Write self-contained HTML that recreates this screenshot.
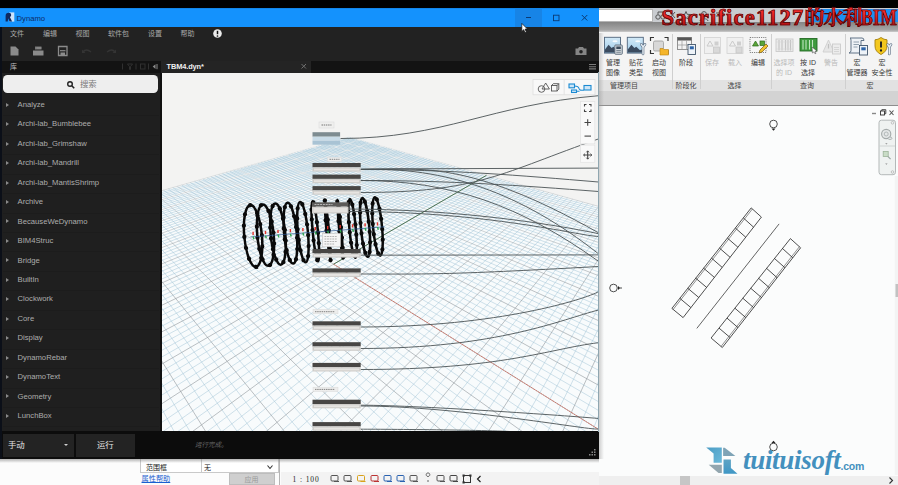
<!DOCTYPE html><html><head><meta charset="utf-8"><title>Dynamo</title><style>
*{margin:0;padding:0;box-sizing:border-box}
html,body{width:898px;height:485px;overflow:hidden;background:#fbfcfc;font-family:"Liberation Sans","Noto Sans CJK SC",sans-serif;}
.a{position:absolute}
.t{position:absolute;white-space:nowrap;line-height:1}
#dyn{left:0;top:0;width:599px;height:459px;overflow:hidden}
.menu .t{top:29.5px;font-size:7px;color:#a8a8a8}
.lib .it{position:absolute;left:17.5px;font-size:7.700px;color:#adadad;white-space:nowrap;line-height:1}
.lib .tri{position:absolute;left:6px;width:0;height:0;border-left:3px solid #8a8a8a;border-top:2px solid transparent;border-bottom:2px solid transparent}
.lib .sep{position:absolute;left:3px;width:156px;height:1px;background:#1c1c1c}
.rb .t{font-size:7px;color:#3a3a3a;text-align:center;transform:translateX(-50%)}
.rb .d{color:#b9b9b9}
.rb .pl{font-size:7px;color:#444;top:81.500px;transform:translateX(-50%)}
.rt span{color:transparent;background:linear-gradient(#f22a2a 30%,#a80c10 88%);-webkit-background-clip:text;background-clip:text;-webkit-text-stroke:0.7px #4a0505}
.rb .vs{position:absolute;top:34px;width:1px;height:55px;background:#cfcfcf}
</style></head><body>
<div class="a" style="left:0;top:0;width:898px;height:8px;background:#000"></div>
<div class="a" style="left:599px;top:8px;width:299px;height:14px;background:#c9ccd0"></div>
<div class="a" style="left:599px;top:8.500px;width:54px;height:13px;background:#fff;border:1px solid #b5b5b5;border-left:0"></div>
<div class="a" style="left:809px;top:8.500px;width:89px;height:13.500px;background:#1c8ff2"></div>
<svg class="a" style="left:652px;top:9px" width="160" height="13" viewBox="0 0 160 13"><g fill="none" stroke="#555" stroke-width="1"><circle cx="6" cy="8" r="2.2"/><circle cx="11" cy="8" r="2.2"/><path d="M6 5.5V3h5v2.5"/><path d="M18 3l5 6M23 3l-5 6"/><path d="M34 2.5l1.2 2.8 3 .2-2.3 1.9.8 2.9-2.7-1.6-2.7 1.6.8-2.9-2.3-1.9 3-.2z"/><circle cx="52" cy="5" r="2.4"/><path d="M48 12c0-3 8-3 8 0"/><path d="M64 4h8M64 7h8"/></g></svg>
<div class="a" style="left:599px;top:21.500px;width:299px;height:10.500px;background:linear-gradient(#858585,#a6a6a6 80%,#cdcdcd)"></div>
<div class="a rb" style="left:599px;top:32px;width:299px;height:59px;background:#f4f4f4;overflow:visible">
<div class="a" style="left:0;top:48px;width:299px;height:11px;background:#e2e2e2"></div>
</div>
<div class="rb">
<div class="t" style="left:613px;top:59.2px">管理</div>
<div class="t" style="left:613px;top:68.7px">图像</div>
<div class="t" style="left:636px;top:59.2px">贴花</div>
<div class="t" style="left:636px;top:68.7px">类型</div>
<div class="t" style="left:659px;top:59.2px">启动</div>
<div class="t" style="left:659px;top:68.7px">视图</div>
<div class="t" style="left:686px;top:59.2px">阶段</div>
<div class="t d" style="left:712px;top:59.2px">保存</div>
<div class="t d" style="left:735px;top:59.2px">载入</div>
<div class="t" style="left:758px;top:59.2px">编辑</div>
<div class="t d" style="left:784px;top:59.2px">选择项</div>
<div class="t d" style="left:784px;top:68.7px">的 ID</div>
<div class="t" style="left:808px;top:59.2px">按 ID</div>
<div class="t" style="left:808px;top:68.7px">选择</div>
<div class="t d" style="left:831px;top:59.2px">警告</div>
<div class="t" style="left:857px;top:59.2px">宏</div>
<div class="t" style="left:857px;top:68.7px">管理器</div>
<div class="t" style="left:882px;top:59.2px">宏</div>
<div class="t" style="left:882px;top:68.7px">安全性</div>
<div class="t pl" style="left:624px">管理项目</div>
<div class="t pl" style="left:686px">阶段化</div>
<div class="t pl" style="left:734.5px">选择</div>
<div class="t pl" style="left:807px">查询</div>
<div class="t pl" style="left:870px">宏</div>
<div class="vs" style="left:672px"></div>
<div class="vs" style="left:699.5px"></div>
<div class="vs" style="left:771px"></div>
<div class="vs" style="left:844.5px"></div>
</div>
<svg class="a" style="left:599px;top:33px" width="299" height="26" viewBox="599 33 299 26">
<defs><linearGradient id="sky" x1="0" y1="0" x2="0" y2="1"><stop offset="0" stop-color="#d3eaf8"/><stop offset="1" stop-color="#9fcbe8"/></linearGradient></defs>
<rect x="604.5" y="37.300" width="16" height="15.800" fill="url(#sky)" stroke="#50657c" stroke-width="0.9"/><ellipse cx="615.0" cy="41.300" rx="2.600" ry="1" fill="#fff" opacity=".85"/><path d="M605.0 52.600v-3.200l3.600-4.600 3 3.200 1.800-1.300 3.800 3.600 2.800-1v3.300z" fill="#3b4b5f"/><rect x="614.800" y="45" width="7.500" height="9.300" rx="0.800" fill="#cfd5da" stroke="#5a6a7a" stroke-width="0.9"/><rect x="616.300" y="46.500" width="4.500" height="2.500" fill="#3d4d5e"/><path d="M616.300 50.500h4.500M616.300 52.300h4.500" stroke="#6a7886" stroke-width="0.8"/>
<rect x="627.3" y="37.300" width="16" height="15.800" fill="url(#sky)" stroke="#50657c" stroke-width="0.9"/><ellipse cx="637.8" cy="41.300" rx="2.600" ry="1" fill="#fff" opacity=".85"/><path d="M627.8 52.600v-3.200l3.600-4.600 3 3.200 1.800-1.300 3.800 3.600 2.800-1v3.300z" fill="#3b4b5f"/><path d="M641.300 44.300l1.700 2.700v7M645 44.300l-1.900 2.700" stroke="#5a6d82" stroke-width="2.600" fill="none" stroke-linecap="round"/><path d="M641.300 44.300l1.700 2.700v7M645 44.300l-1.900 2.700" stroke="#e6edf3" stroke-width="1.400" fill="none" stroke-linecap="round"/>
<g fill="none" stroke="#333" stroke-width="1.2"><path d="M650.5 41v-3.5h3.5M664.5 37.5h3.5v3.5M668 50v3.5h-3.5M654 53.5h-3.5v-3.5"/></g><rect x="653.5" y="41" width="10" height="10" rx="1.5" fill="#d8d8d8" stroke="#9a9a9a" stroke-width="0.8"/><path d="M660 48.5h3l1 1h4.5v5.5h-8.5z" fill="#f4b52a" stroke="#b97f10" stroke-width="0.6"/>
<rect x="677.5" y="37.5" width="14" height="12" fill="#f2f2f2" stroke="#7a7a7a" stroke-width="0.8"/><rect x="677.5" y="37.5" width="14" height="3" fill="#555"/><path d="M682 40.5v9M686.5 40.5v9M677.5 45h14" stroke="#9a9a9a" stroke-width="0.7"/><rect x="688" y="44.5" width="7.5" height="10" fill="#eef3f8" stroke="#42566b" stroke-width="0.9"/><rect x="689.8" y="46.3" width="4" height="3" fill="#2d64a8"/>
<rect x="704.5" y="37.5" width="16" height="16" fill="#f0f0f0" stroke="#d2d2d2" stroke-width="0.8"/><path d="M707.0 46l3-5 3 5z" fill="none" stroke="#c6c6c6" stroke-width="0.9"/><rect x="714.5" y="41.5" width="4" height="4" fill="#cfcfcf"/><rect x="713.5" y="47" width="6" height="6" fill="#d9d9d9" stroke="#c4c4c4" stroke-width="0.7"/>
<rect x="727" y="37.5" width="16" height="16" fill="#f0f0f0" stroke="#d2d2d2" stroke-width="0.8"/><path d="M729.5 46l3-5 3 5z" fill="none" stroke="#c6c6c6" stroke-width="0.9"/><rect x="737" y="41.5" width="4" height="4" fill="#cfcfcf"/><rect x="736" y="47" width="6" height="6" fill="#d9d9d9" stroke="#c4c4c4" stroke-width="0.7"/>
<rect x="750" y="37.5" width="16" height="15" fill="#f6f6f6" stroke="#666" stroke-width="0.8" stroke-dasharray="1.2 1"/><path d="M752.5 46l3-5 3 5z" fill="#5aa53a" stroke="#2d6a1a" stroke-width="0.7"/><rect x="760" y="41" width="4.5" height="4.5" fill="#5aa53a" stroke="#2d6a1a" stroke-width="0.7"/><path d="M759 53l1-3 6-6 2 2-6 6z" fill="#f2c230" stroke="#7a5a10" stroke-width="0.7"/>
<rect x="776" y="39" width="17" height="12.500" fill="#ebebeb" stroke="#c6c6c6" stroke-width="0.8"/><path d="M779 40v10.500M782 40v10.500M785.500 40v10.500M788 40v10.500M790.500 40v10.500" stroke="#c4c4c4" stroke-width="1.100"/><path d="M776 42h17M776 49h17" stroke="#d6d6d6" stroke-width="0.6"/>
<rect x="800" y="38.5" width="17" height="12.5" fill="#3e9a3e" stroke="#256b25" stroke-width="0.9"/><path d="M803 40v9.5M806 40v9.5M809.5 40v9.5M812.5 40v9.5" stroke="#bfe6bf" stroke-width="1.1"/><path d="M812 47l5 4-2 .3 1 2-1 .5-1-2-1.6 1.2z" fill="#fff" stroke="#333" stroke-width="0.5"/>
<path d="M823 52l5.500-12 5.500 12z" fill="#e6e6e6" stroke="#cbcbcb" stroke-width="0.8"/><path d="M828.500 44v4.500" stroke="#c0c0c0" stroke-width="1.200"/><rect x="832.500" y="44" width="8" height="10" fill="#ececec" stroke="#c8c8c8" stroke-width="0.8"/><path d="M834 47.500h5M834 49.500h5M834 51.500h5" stroke="#cdcdcd" stroke-width="0.7"/>
<path d="M850 38h12q2 0 2 2.5h-3v10q0 2.5-2 2.5h-10q2-.5 2-2.5v-10q0-2.500-1-2.500z" fill="#eef2f6" stroke="#51657a" stroke-width="0.9"/><path d="M853.500 42h5.500M853.500 44.500h5.500M853.500 47h4" stroke="#7a8b9c" stroke-width="0.8"/><rect x="859.5" y="45.500" width="8" height="9.500" fill="#eef3f8" stroke="#42566b" stroke-width="0.9"/><rect x="861.300" y="47.300" width="4.400" height="3" fill="#2d64a8"/>
<path d="M881 37.500q3 2.300 6 2.300v6.200q0 5.500-6 8.500q-6-3-6-8.500v-6.200q3 0 6-2.300z" fill="#f3c81f" stroke="#a57f0c" stroke-width="0.9"/><path d="M881 41.500v6" stroke="#222" stroke-width="1.900"/><circle cx="881" cy="50.500" r="1.150" fill="#222"/><path d="M887.700 44.500l1.600 2.500v7M891 44.500l-1.700 2.500" stroke="#5a6d82" stroke-width="2.600" fill="none" stroke-linecap="round"/><path d="M887.700 44.500l1.600 2.500v7M891 44.500l-1.700 2.500" stroke="#e6edf3" stroke-width="1.400" fill="none" stroke-linecap="round"/>
</svg>
<div class="a" style="left:599px;top:91px;width:299px;height:14px;background:#d3d3d3"></div>
<div class="a" style="left:599px;top:104.500px;width:299px;height:1px;background:#8e8e8e"></div>
<div class="a" style="left:599px;top:105.500px;width:299px;height:370px;background:#fbfcfc"></div>
<svg class="a" style="left:599px;top:105px" width="299" height="371" viewBox="599 105 299 371">
<g fill="none" stroke="#222" stroke-width="0.8">
<path d="M751.2 207.9L761.4 217.1L683.1 317.6L671.9 308.4Z"/><path d="M743.3 217.9L753.6 227.2"/><path d="M735.3 228.0L745.7 237.2"/><path d="M727.4 238.1L737.9 247.2"/><path d="M719.5 248.1L730.1 257.3"/><path d="M711.5 258.1L722.2 267.4"/><path d="M703.6 268.2L714.4 277.4"/><path d="M695.7 278.2L706.6 287.4"/><path d="M687.8 288.3L698.8 297.5"/><path d="M679.8 298.3L690.9 307.6"/><path d="M752.4 209.0L673.1 309.5" stroke-width="0.5"/><path d="M790.4 238.6L800.6 247.8L722.3 347.5L711.1 338.0Z"/><path d="M782.5 248.5L792.8 257.8"/><path d="M774.5 258.5L784.9 267.7"/><path d="M766.6 268.4L777.1 277.7"/><path d="M758.7 278.4L769.3 287.7"/><path d="M750.8 288.3L761.5 297.6"/><path d="M742.8 298.2L753.6 307.6"/><path d="M734.9 308.2L745.8 317.6"/><path d="M727.0 318.1L738.0 327.6"/><path d="M719.0 328.1L730.1 337.5"/><path d="M799.4 246.7L721.1 346.4" stroke-width="0.5"/><path d="M779.1 223.900L696.800 328.400" stroke-width="0.700"/>
</g>
<g fill="none" stroke="#222" stroke-width="0.8"><circle cx="773.500" cy="124" r="3.800"/><circle cx="773.500" cy="447" r="3.800"/><circle cx="613.500" cy="288" r="3.800"/></g><path d="M771.500 128.500l2 2.200 2-2.200z" fill="#222"/><path d="M771.500 443l2-2.200 2 2.200z" fill="#222"/><path d="M618 286l2.200 2-2.200 2z" fill="#222"/><path d="M620 288h2" stroke="#222" stroke-width="0.8"/>
<rect x="879" y="120.200" width="16.500" height="54.500" rx="2.500" fill="#eff2f1" stroke="#b4b9b9" stroke-width="1"/><path d="M879.500 146h15.500" stroke="#c9cdcd" stroke-width="0.8"/><circle cx="886.200" cy="134" r="4.600" fill="#e4e7e7" stroke="#a4aaaa" stroke-width="1.100"/><circle cx="886.200" cy="134" r="2" fill="none" stroke="#adb3b3" stroke-width="0.900"/><ellipse cx="890" cy="138.300" rx="2" ry="1.200" fill="#e8eaea" stroke="#9aa0a0" stroke-width="0.700"/><rect x="883.200" y="151.500" width="5" height="5" fill="#c9dcc6" stroke="#9db39a" stroke-width="0.8"/><path d="M887.800 156.300l2.800 2.800" stroke="#9aa6a0" stroke-width="1.200"/><circle cx="892.500" cy="122.800" r="1.300" fill="none" stroke="#a5a5a5" stroke-width="0.6"/><circle cx="892.500" cy="172" r="1.300" fill="none" stroke="#a5a5a5" stroke-width="0.6"/><path d="M885.200 143.300h2.400l-1.200 1.300zM885.200 163.500h2.400l-1.200 1.300z" fill="#888"/>
<g stroke="#555" stroke-width="0.9" fill="none"><path d="M872 113.500h4" stroke="#888" stroke-width="1.400"/><rect x="880.500" y="111" width="4" height="4" stroke="#333"/><path d="M881.800 111v-1.300h4v4h-1.300" stroke="#333"/><path d="M889.500 110.500l4 4.500M893.500 110.500l-4 4.500" stroke-width="1.100"/></g>
<rect x="894.800" y="176" width="3.200" height="299" fill="#f3f4f4"/><rect x="895.500" y="284" width="2.500" height="13" fill="#c2c2c2"/>
</svg>
<div class="a" style="left:599px;top:475.500px;width:299px;height:10px;background:#efefef"></div>
<div class="a" style="left:680px;top:476px;width:10px;height:9px;background:#c6c6c6"></div>
<svg class="a" style="left:886px;top:476px" width="10" height="9"><path d="M3.500 1.500l3 3-3 3" fill="none" stroke="#333" stroke-width="1.100"/></svg>
<svg class="a" style="left:704px;top:444px" width="36" height="32" viewBox="704 444 36 32"><defs><linearGradient id="lg1" x1="0" y1="0" x2="1" y2="1"><stop offset="0" stop-color="#4b9cc4"/><stop offset="1" stop-color="#6bb9da"/></linearGradient><linearGradient id="lg2" x1="0" y1="0" x2="0" y2="1"><stop offset="0" stop-color="#5fa4c4"/><stop offset="1" stop-color="#3f97c6"/></linearGradient></defs><path d="M706.200 447.400h15.600v15.300h-8.200v-9.100z" fill="url(#lg1)"/><path d="M723.100 447.800h1.600l10.700 8.300h-12.300z" fill="#7ea3b6"/><path d="M723.500 459.400h7.400v8.600l6.600 5.800h-14z" fill="url(#lg2)"/><path d="M708.700 464.700h13.100v8.300h-3.300z" fill="#93a6af"/></svg><div class="t" style="left:743px;top:444.500px;font:italic bold 27px 'Liberation Serif',serif;color:#4390be;letter-spacing:-0.3px">tuituisoft</div><div class="t" style="left:840.500px;top:460px;font:bold 10.500px 'Liberation Sans',sans-serif;color:#4390be;letter-spacing:-0.2px">.com</div>
<div class="a" style="left:0;top:459px;width:599px;height:26px;background:#fcfcfc"></div>
<div class="a" style="left:140px;top:459px;width:139px;height:14px;background:#fff;border:1px solid #c9c9c9;border-top:0"></div><div class="a" style="left:201px;top:459px;width:1px;height:14px;background:#c9c9c9"></div><div class="t" style="left:146px;top:463.500px;font-size:7px;color:#222">范围框</div><div class="t" style="left:204px;top:463.500px;font-size:7px;color:#222">无</div><svg class="a" style="left:266px;top:463px" width="8" height="8"><path d="M1.500 2.500l2.500 3 2.500-3" fill="none" stroke="#333" stroke-width="1.100"/></svg><div class="t" style="left:141.500px;top:475px;font-size:7.200px;color:#1a5fd0;text-decoration:underline">属性帮助</div><div class="a" style="left:228.500px;top:473px;width:46.500px;height:12px;background:#cfcfcf;border:1px solid #bdbdbd"></div><div class="t" style="left:244.500px;top:475.500px;font-size:7px;color:#9a9a9a">应用</div><div class="a" style="left:278.500px;top:459px;width:1px;height:26px;background:#b5b5b5"></div><div class="a" style="left:281px;top:459px;width:318px;height:13px;background:#fbfcfc"></div><div class="a" style="left:281px;top:472px;width:318px;height:13px;background:#f3f3f3"></div><div class="t" style="left:292.500px;top:475px;font:7.500px 'Liberation Serif',serif;color:#222;letter-spacing:0.9px">1 : 100</div><svg class="a" style="left:0;top:0" width="600" height="485" viewBox="0 0 600 485"><rect x="331" y="475.500" width="7" height="5.500" rx="1" fill="none" stroke="#555" stroke-width="1"/><path d="M334 481.500h5" stroke="#555" stroke-width="1"/><rect x="344" y="475.500" width="7" height="5.500" rx="1" fill="none" stroke="#555" stroke-width="1"/><path d="M347 481.500h5" stroke="#555" stroke-width="1"/><rect x="357.5" y="475.500" width="7" height="5.500" rx="1" fill="none" stroke="#d9a21b" stroke-width="1"/><path d="M360.5 481.500h5" stroke="#d9a21b" stroke-width="1"/><rect x="371" y="475.500" width="7" height="5.500" rx="1" fill="none" stroke="#b33" stroke-width="1"/><path d="M374 481.500h5" stroke="#b33" stroke-width="1"/><rect x="384" y="475.500" width="7" height="5.500" rx="1" fill="none" stroke="#2a62b0" stroke-width="1"/><path d="M387 481.500h5" stroke="#2a62b0" stroke-width="1"/><rect x="397" y="475.500" width="7" height="5.500" rx="1" fill="none" stroke="#2a62b0" stroke-width="1"/><path d="M400 481.500h5" stroke="#2a62b0" stroke-width="1"/><rect x="410" y="475.500" width="7" height="5.500" rx="1" fill="none" stroke="#555" stroke-width="1"/><path d="M413 481.500h5" stroke="#555" stroke-width="1"/><path d="M428 476.500a1.800 1.800 0 1 1 0.010 0zM428 480v2" fill="none" stroke="#555" stroke-width="0.9"/><rect x="437" y="475.500" width="7" height="5.500" rx="1" fill="none" stroke="#555" stroke-width="1"/><path d="M440 481.500h5" stroke="#555" stroke-width="1"/><rect x="450" y="475.500" width="7" height="5.500" rx="1" fill="none" stroke="#444" stroke-width="1"/><path d="M453 481.500h5" stroke="#444" stroke-width="1"/><rect x="463.5" y="475.500" width="7" height="7" fill="none" stroke="#333" stroke-width="1"/><rect x="462.5" y="474.500" width="2.200" height="2.200" fill="#333"/><rect x="469.3" y="474.500" width="2.200" height="2.200" fill="#333"/><rect x="462.5" y="481.300" width="2.200" height="2.200" fill="#333"/><path d="M480.5 476l-3 3 3 3" fill="none" stroke="#222" stroke-width="1.200"/></svg>
<div class="a" style="left:0;top:459px;width:599px;height:4px;background:linear-gradient(rgba(120,120,120,.55),rgba(200,200,200,0))"></div>
<div id="dyn" class="a">
<div class="a" style="left:0;top:8px;width:599px;height:18.600px;background:linear-gradient(#0f6fc4,#1492fd 0.8px)"></div><div class="a" style="left:514.500px;top:8.500px;width:27.500px;height:18.100px;background:#1784e6"></div><svg class="a" style="left:0;top:8px" width="599" height="30" viewBox="0 8 599 30"><rect x="9.300" y="12.400" width="5" height="9.200" fill="#cfe4fa"/><path d="M5.600 21.500v-5.500q0-3.300 3.200-3.300q2.400 0 2.400 2.300q0 1.500-1.300 2l2.200 4.500h-2.600l-1.200-3.300l-.6 3.300z" fill="#10285e"/><path d="M526 17.500h5" stroke="#0b3a74" stroke-width="1"/><rect x="553.500" y="15.200" width="5.500" height="5.500" fill="none" stroke="#0b3a74" stroke-width="0.9"/><path d="M581.800 15l5.500 5.500M587.300 15l-5.500 5.500" stroke="#0b3a74" stroke-width="1"/></svg><div class="t" style="left:16.500px;top:14.900px;font-size:7.700px;color:#0f2c66">Dynamo</div><div class="a" style="left:0;top:26.500px;width:599px;height:34px;background:#222"></div><div class="menu"><div class="t" style="left:10px">文件</div><div class="t" style="left:43px">编辑</div><div class="t" style="left:75.5px">视图</div><div class="t" style="left:108px">软件包</div><div class="t" style="left:148px">设置</div><div class="t" style="left:180.5px">帮助</div></div><svg class="a" style="left:0;top:26px" width="599" height="34" viewBox="0 26 599 34"><circle cx="217.500" cy="33.500" r="4.300" fill="#ececec"/><path d="M217.500 30.800v3.400" stroke="#111" stroke-width="1.500"/><circle cx="217.500" cy="36" r="0.850" fill="#111"/><path d="M10.500 46.500h5l3 3v6h-8z" fill="#8b8b8b"/><path d="M35 46.500h6.500v3h-6.500z" fill="#777"/><path d="M33 50.500h10.500v5h-10.500z" fill="#8b8b8b"/><path d="M36.500 48h5" stroke="#aaa" stroke-width="0.6"/><path d="M58.500 46.500h8.500v9h-8.500z" fill="none" stroke="#8b8b8b" stroke-width="1.300"/><path d="M60 50.700h5.500" stroke="#8b8b8b" stroke-width="1.200"/><rect x="60.500" y="52.500" width="4.500" height="3" fill="#8b8b8b"/><path d="M83 52q3-4 8 0" fill="none" stroke="#343434" stroke-width="1.600"/><path d="M82 49.500v3.500h3.500z" fill="#343434"/><path d="M115 52q-3-4-8 0" fill="none" stroke="#343434" stroke-width="1.600"/><path d="M116 49.500v3.500h-3.500z" fill="#343434"/><path d="M575.500 48.500h2.500l1-1.500h4l1 1.500h2.500v6.500h-11z" fill="#858585"/><circle cx="581" cy="51.700" r="1.800" fill="#222"/></svg><div class="a" style="left:0;top:60.500px;width:599px;height:12px;background:#131313"></div><div class="a" style="left:161px;top:60.500px;width:149.500px;height:12px;background:#242424"></div><div class="t" style="left:10px;top:63.200px;font-size:7px;color:#bdbdbd">库</div><div class="t" style="left:166.500px;top:62.800px;font-size:7.400px;color:#f0f0f0;font-weight:bold;letter-spacing:-0.100px">TBM4.dyn*</div><svg class="a" style="left:0;top:60px" width="599" height="13" viewBox="0 60 599 13"><g stroke="#303030" stroke-width="1" fill="none"><path d="M122.500 63.500v6M136 63.500v6M148.500 63.500v6"/><path d="M127.500 64h5l-2 2.500v3h-1v-3z"/><rect x="140.500" y="64" width="4.500" height="5"/></g><path d="M155.500 64.300v4.600l-2.800-2.300z" fill="#8a8a8a"/><path d="M157 64v5.200" stroke="#8a8a8a" stroke-width="1"/><path d="M301.500 64l4.500 4.500M306 64l-4.500 4.500" stroke="#6f6f6f" stroke-width="1"/><path d="M589 64.500h7M589 66.700h7M589 68.900h7" stroke="#7a7a7a" stroke-width="1.100"/></svg><div class="a lib" style="left:0;top:72.500px;width:161px;height:359px;background:#1f1f1f;overflow:hidden"><div class="a" style="left:3px;top:2.500px;width:154.500px;height:17.500px;background:#eee;border-radius:4.500px"></div><svg class="a" style="left:66px;top:7px" width="10" height="10"><circle cx="4" cy="4" r="2.300" fill="none" stroke="#222" stroke-width="1.400"/><path d="M5.800 5.800l2.400 2.400" stroke="#222" stroke-width="1.600"/></svg><div class="t" style="left:80px;top:7.400px;font-size:8.400px;color:#7a7a7a">搜索</div><div class="tri" style="top:30.3px"></div><div class="it" style="top:28.5px">Analyze</div><div class="sep" style="top:42.8px"></div><div class="tri" style="top:49.7px"></div><div class="it" style="top:47.9px">Archi-lab_Bumblebee</div><div class="sep" style="top:62.2px"></div><div class="tri" style="top:69.2px"></div><div class="it" style="top:67.4px">Archi-lab_Grimshaw</div><div class="sep" style="top:81.7px"></div><div class="tri" style="top:88.6px"></div><div class="it" style="top:86.8px">Archi-lab_Mandrill</div><div class="sep" style="top:101.1px"></div><div class="tri" style="top:108.1px"></div><div class="it" style="top:106.3px">Archi-lab_MantisShrimp</div><div class="sep" style="top:120.6px"></div><div class="tri" style="top:127.5px"></div><div class="it" style="top:125.7px">Archive</div><div class="sep" style="top:140.0px"></div><div class="tri" style="top:146.9px"></div><div class="it" style="top:145.1px">BecauseWeDynamo</div><div class="sep" style="top:159.4px"></div><div class="tri" style="top:166.4px"></div><div class="it" style="top:164.6px">BIM4Struc</div><div class="sep" style="top:178.9px"></div><div class="tri" style="top:185.8px"></div><div class="it" style="top:184.0px">Bridge</div><div class="sep" style="top:198.3px"></div><div class="tri" style="top:205.3px"></div><div class="it" style="top:203.5px">BuiltIn</div><div class="sep" style="top:217.8px"></div><div class="tri" style="top:224.7px"></div><div class="it" style="top:222.9px">Clockwork</div><div class="sep" style="top:237.2px"></div><div class="tri" style="top:244.1px"></div><div class="it" style="top:242.3px">Core</div><div class="sep" style="top:256.6px"></div><div class="tri" style="top:263.6px"></div><div class="it" style="top:261.8px">Display</div><div class="sep" style="top:276.1px"></div><div class="tri" style="top:283.0px"></div><div class="it" style="top:281.2px">DynamoRebar</div><div class="sep" style="top:295.5px"></div><div class="tri" style="top:302.5px"></div><div class="it" style="top:300.7px">DynamoText</div><div class="sep" style="top:315.0px"></div><div class="tri" style="top:321.9px"></div><div class="it" style="top:320.1px">Geometry</div><div class="sep" style="top:334.4px"></div><div class="tri" style="top:341.3px"></div><div class="it" style="top:339.5px">LunchBox</div><div class="sep" style="top:353.8px"></div></div><div class="a" style="left:160px;top:72.500px;width:1.500px;height:359px;background:#101010"></div><div class="a" style="left:0;top:431px;width:599px;height:28px;background:#0c0c0c"></div><div class="a" style="left:2.700px;top:433.500px;width:71.500px;height:23px;background:#232323"></div><div class="a" style="left:76px;top:433.500px;width:59px;height:23px;background:#232323"></div><div class="t" style="left:8px;top:440.600px;font-size:8.400px;color:#e4e4e4">手动</div><div class="a" style="left:63.500px;top:443.800px;width:0;height:0;border-top:2.500px solid #d0d0d0;border-left:2.300px solid transparent;border-right:2.300px solid transparent"></div><div class="t" style="left:97px;top:440.600px;font-size:8.400px;color:#e4e4e4">运行</div><div class="t" style="left:195px;top:441.800px;font-size:6.500px;color:#6a6a6a;font-style:italic">运行完成。</div><svg class="a" style="left:588px;top:449px" width="9" height="9"><g fill="#8a8a8a"><rect x="6" y="0" width="1.500" height="1.500"/><rect x="3.500" y="2.500" width="1.500" height="1.500"/><rect x="6" y="2.500" width="1.500" height="1.500"/><rect x="1" y="5" width="1.500" height="1.500"/><rect x="3.500" y="5" width="1.500" height="1.500"/><rect x="6" y="5" width="1.500" height="1.500"/></g></svg><div class="a" style="left:0;top:26.500px;width:2px;height:433px;background:#0b0f18"></div><svg class="a" style="left:161.500px;top:72.500px" width="437" height="358.500" viewBox="161.500 72.500 437 358.500"><rect x="161" y="72" width="438" height="360" fill="#f3f3f2"/><path d="M348.5 136.6L770.2 253.7L1109.2 4007.0L-1424.9 4023.4L-132.1 274.3Z" fill="#f8fbfc"/><path d="M-133.1 277.2L350.6 137.2M-121.7 271.4L-1270.8 4022.4M-134.1 280.1L352.6 137.7M-111.5 268.4L-1116.6 4021.4M-135.1 283.1L354.7 138.3M-101.5 265.6L-962.4 4020.4M-136.2 286.1L356.8 138.9M-91.8 262.8L-808.3 4019.4M-138.3 292.4L361.1 140.1M-72.9 257.4L-499.9 4017.4M-139.5 295.7L363.3 140.7M-63.8 254.8L-345.7 4016.4M-140.6 299.1L365.5 141.3M-54.9 252.2L-191.6 4015.4M-141.8 302.5L367.8 141.9M-46.2 249.7L-37.4 4014.4M-144.3 309.7L372.3 143.2M-29.4 244.9L270.9 4012.4M-145.6 313.4L374.6 143.8M-21.2 242.6L425.1 4011.4M-146.9 317.2L376.9 144.5M-13.2 240.3L579.3 4010.4M-148.2 321.1L379.3 145.1M-5.4 238.0L733.4 4009.5M-151.0 329.3L384.1 146.5M9.8 233.7L1041.8 4007.5M-152.5 333.5L386.5 147.2M17.2 231.6L1073.8 3615.3M-154.0 337.9L389.0 147.8M24.4 229.5L1025.6 3081.1M-155.6 342.4L391.5 148.5M31.5 227.5L989.8 2685.1M-158.8 351.8L396.6 149.9M45.2 223.5L940.4 2137.4M-160.5 356.7L399.2 150.7M51.9 221.6L922.5 1940.2M-162.3 361.8L401.8 151.4M58.4 219.7L907.8 1776.6M-164.1 367.0L404.4 152.1M64.9 217.9L895.3 1638.7M-167.8 378.0L409.8 153.6M77.4 214.3L875.5 1419.1M-169.8 383.7L412.5 154.4M83.5 212.6L867.5 1330.2M-171.9 389.7L415.3 155.1M89.5 210.8L860.4 1252.0M-174.0 395.8L418.1 155.9M95.3 209.2L854.1 1182.6M-178.4 408.7L423.8 157.5M106.8 205.9L843.5 1064.9M-180.8 415.5L426.7 158.3M112.3 204.3L839.0 1014.6M-183.2 422.6L429.7 159.1M117.8 202.7L834.8 968.9M-185.7 429.9L432.7 160.0M123.2 201.2L831.1 927.2M-191.1 445.4L438.7 161.6M133.7 198.2L824.5 854.0M-193.9 453.6L441.8 162.5M138.8 196.7L821.5 821.6M-196.8 462.1L445.0 163.4M143.8 195.3L818.8 791.7M-199.9 470.9L448.1 164.3M148.8 193.8L816.3 763.9M-206.4 489.8L454.6 166.1M158.4 191.1L811.8 714.0M-209.9 499.8L457.9 167.0M163.1 189.7L809.8 691.5M-213.5 510.3L461.3 167.9M167.8 188.4L807.9 670.3M-217.3 521.3L464.7 168.8M172.3 187.1L806.1 650.5M-225.4 544.8L471.6 170.8M181.3 184.5L802.8 614.3M-229.7 557.4L475.1 171.7M185.6 183.3L801.3 597.7M-234.3 570.6L478.7 172.7M189.9 182.1L799.9 582.0M-239.1 584.5L482.3 173.7M194.1 180.8L798.6 567.2M-249.4 614.6L489.8 175.8M202.4 178.5L796.1 539.7M-255.0 630.9L493.5 176.9M206.4 177.3L794.9 527.0M-261.0 648.1L497.4 177.9M210.4 176.2L793.8 514.9M-267.3 666.3L501.3 179.0M214.3 175.1L792.8 503.4M-281.0 706.2L509.2 181.2M222.0 172.9L790.8 481.8M-288.5 728.0L513.3 182.3M225.8 171.8L789.9 471.8M-296.6 751.3L517.4 183.5M229.5 170.7L789.1 462.1M-305.2 776.2L521.6 184.6M233.1 169.7L788.2 452.9M-324.2 831.6L530.2 187.0M240.3 167.6L786.7 435.6M-334.9 862.4L534.6 188.2M243.8 166.6L785.9 427.4M-346.4 895.7L539.0 189.5M247.2 165.6L785.2 419.6M-358.8 931.8L543.5 190.7M250.6 164.7L784.5 412.0M-387.1 1013.7L552.8 193.3M257.3 162.7L783.3 397.7M-403.2 1060.5L557.5 194.6M260.6 161.8L782.6 391.0M-420.9 1111.9L562.3 195.9M263.8 160.9L782.1 384.5M-440.5 1168.7L567.2 197.3M267.0 160.0L781.5 378.2M-486.6 1302.4L577.2 200.1M273.2 158.2L780.4 366.3M-513.9 1381.6L582.3 201.5M276.3 157.3L779.9 360.6M-544.9 1471.4L587.5 202.9M279.3 156.4L779.4 355.1M-580.2 1573.9L592.8 204.4M282.3 155.6L778.9 349.8M-668.5 1829.8L603.7 207.4M288.2 153.9L778.0 339.7M-724.6 1992.4L609.3 209.0M291.0 153.1L777.6 334.8M-791.7 2187.2L614.9 210.5M293.9 152.3L777.1 330.1M-873.7 2424.8L620.7 212.1M296.7 151.5L776.7 325.6M-1106.9 3101.1L632.5 215.4M302.2 149.9L776.0 316.9M-1281.0 3605.9L638.6 217.1M304.9 149.1L775.6 312.7M-1371.9 4023.1L644.8 218.8M307.6 148.3L775.2 308.6M-1225.9 4022.1L651.1 220.6M310.2 147.6L774.9 304.7M-934.0 4020.2L664.1 224.2M315.4 146.1L774.2 297.1M-788.1 4019.3L670.7 226.0M317.9 145.4L773.8 293.5M-642.1 4018.4L677.5 227.9M320.5 144.6L773.5 289.9M-496.2 4017.4L684.4 229.8M322.9 143.9L773.2 286.5M-204.3 4015.5L698.7 233.8M327.8 142.5L772.6 279.8M-58.4 4014.6L706.0 235.8M330.2 141.8L772.3 276.6M87.6 4013.6L713.5 237.9M332.6 141.2L772.0 273.5M233.5 4012.7L721.1 240.0M335.0 140.5L771.8 270.5M525.4 4010.8L736.8 244.4M339.6 139.2L771.2 264.6M671.4 4009.9L744.9 246.6M341.8 138.5L771.0 261.8M817.3 4008.9L753.2 248.9M344.1 137.9L770.7 259.0M963.2 4008.0L761.6 251.3M346.3 137.2L770.5 256.3" stroke="#9fc2d4" stroke-width="0.6" fill="none" opacity="0.8"/><defs><linearGradient id="mg" gradientUnits="userSpaceOnUse" x1="0" y1="135" x2="0" y2="300"><stop offset="0" stop-color="#8f979c" stop-opacity="0.15"/><stop offset="0.45" stop-color="#8f979c" stop-opacity="0.6"/><stop offset="1" stop-color="#8f969b" stop-opacity="1"/></linearGradient></defs><path d="M-132.1 274.3L348.5 136.6M-132.1 274.3L-1424.9 4023.4M-137.2 289.2L359.0 139.5M-82.2 260.1L-654.1 4018.4M-143.0 306.0L370.0 142.6M-37.7 247.3L116.8 4013.4M-149.6 325.1L381.7 145.8M2.3 235.8L887.6 4008.5M-157.2 347.0L394.0 149.2M38.4 225.5L962.2 2379.9M-165.9 372.4L407.1 152.9M71.2 216.1L884.7 1520.9M-176.2 402.1L420.9 156.7M101.1 207.5L848.5 1120.6M-188.4 437.5L435.7 160.8M128.5 199.7L827.6 889.0M-203.1 480.2L451.4 165.1M153.6 192.5L814.0 738.1M-221.2 532.8L468.1 169.8M176.8 185.8L804.4 631.9M-244.1 599.2L486.0 174.8M198.3 179.7L797.3 553.1M-273.9 685.6L505.2 180.1M218.2 173.9L791.8 492.3M-314.4 802.9L525.9 185.8M236.7 168.6L787.4 444.0M-372.3 970.9L548.1 192.0M254.0 163.7L783.9 404.7M-462.3 1231.9L572.1 198.7M270.1 159.1L780.9 372.1M-621.0 1692.1L598.2 205.9M285.3 154.7L778.5 344.6M-975.9 2721.2L626.6 213.8M299.5 150.7L776.3 321.2M-1080.0 4021.2L657.5 222.4M312.8 146.8L774.5 300.8M-350.3 4016.5L691.5 231.8M325.4 143.2L772.9 283.1M379.5 4011.7L728.9 242.2M337.3 139.8L771.5 267.5M1109.2 4007.0L770.2 253.7M348.5 136.6L770.2 253.7" stroke="url(#mg)" stroke-width="0.6" fill="none"/><path d="M333.1 263.7L1070.4 723.4" stroke="#d5523d" stroke-width="0.650" stroke-dasharray="2.200 0.600"/><path d="M333.1 263.7L486.0 174.8" stroke="#3f6b4a" stroke-width="0.9"/><g fill="none" stroke="#0a0a0a"><ellipse cx="252.6" cy="235.5" rx="8.8" ry="31.0" transform="rotate(-5.300 252.6 235.5)" stroke-width="2.500"/><ellipse cx="252.6" cy="235.5" rx="8.8" ry="31.0" transform="rotate(-5.300 252.6 235.5)" stroke-width="4.200" stroke-linecap="round" pathLength="120" stroke-dasharray="0.010 9.990" stroke-dashoffset="0.0"/><ellipse cx="265.0" cy="234.6" rx="8.2" ry="30.8" transform="rotate(-5.300 265.0 234.6)" stroke-width="2.500"/><ellipse cx="265.0" cy="234.6" rx="8.2" ry="30.8" transform="rotate(-5.300 265.0 234.6)" stroke-width="4.200" stroke-linecap="round" pathLength="120" stroke-dasharray="0.010 9.990" stroke-dashoffset="1.7"/><ellipse cx="277.5" cy="233.6" rx="7.3" ry="30.7" transform="rotate(-5.300 277.5 233.6)" stroke-width="2.500"/><ellipse cx="277.5" cy="233.6" rx="7.3" ry="30.7" transform="rotate(-5.300 277.5 233.6)" stroke-width="4.200" stroke-linecap="round" pathLength="120" stroke-dasharray="0.010 9.990" stroke-dashoffset="3.4"/><ellipse cx="289.9" cy="232.7" rx="6.3" ry="30.5" transform="rotate(-5.300 289.9 232.7)" stroke-width="2.500"/><ellipse cx="289.9" cy="232.7" rx="6.3" ry="30.5" transform="rotate(-5.300 289.9 232.7)" stroke-width="4.200" stroke-linecap="round" pathLength="120" stroke-dasharray="0.010 9.990" stroke-dashoffset="5.1"/><ellipse cx="302.4" cy="231.7" rx="5.0" ry="30.3" transform="rotate(-5.300 302.4 231.7)" stroke-width="2.500"/><ellipse cx="302.4" cy="231.7" rx="5.0" ry="30.3" transform="rotate(-5.300 302.4 231.7)" stroke-width="4.200" stroke-linecap="round" pathLength="120" stroke-dasharray="0.010 9.990" stroke-dashoffset="6.8"/><ellipse cx="314.8" cy="230.8" rx="2.6" ry="30.1" transform="rotate(-5.300 314.8 230.8)" stroke-width="2.500"/><ellipse cx="314.8" cy="230.8" rx="2.6" ry="30.1" transform="rotate(-5.300 314.8 230.8)" stroke-width="4.200" stroke-linecap="round" pathLength="120" stroke-dasharray="0.010 9.990" stroke-dashoffset="8.5"/><ellipse cx="327.2" cy="229.8" rx="1.2" ry="30.0" transform="rotate(-5.300 327.2 229.8)" stroke-width="2.500"/><ellipse cx="327.2" cy="229.8" rx="1.2" ry="30.0" transform="rotate(-5.300 327.2 229.8)" stroke-width="4.200" stroke-linecap="round" pathLength="120" stroke-dasharray="0.010 9.990" stroke-dashoffset="10.2"/><ellipse cx="339.7" cy="228.8" rx="1.0" ry="29.8" transform="rotate(-5.300 339.7 228.8)" stroke-width="2.500"/><ellipse cx="339.7" cy="228.8" rx="1.0" ry="29.8" transform="rotate(-5.300 339.7 228.8)" stroke-width="4.200" stroke-linecap="round" pathLength="120" stroke-dasharray="0.010 9.990" stroke-dashoffset="11.9"/><ellipse cx="352.1" cy="227.9" rx="3.2" ry="29.6" transform="rotate(-5.300 352.1 227.9)" stroke-width="2.500"/><ellipse cx="352.1" cy="227.9" rx="3.2" ry="29.6" transform="rotate(-5.300 352.1 227.9)" stroke-width="4.200" stroke-linecap="round" pathLength="120" stroke-dasharray="0.010 9.990" stroke-dashoffset="13.6"/><ellipse cx="364.6" cy="226.9" rx="4.2" ry="29.5" transform="rotate(-5.300 364.6 226.9)" stroke-width="2.500"/><ellipse cx="364.6" cy="226.9" rx="4.2" ry="29.5" transform="rotate(-5.300 364.6 226.9)" stroke-width="4.200" stroke-linecap="round" pathLength="120" stroke-dasharray="0.010 9.990" stroke-dashoffset="15.3"/><ellipse cx="377.0" cy="226.0" rx="4.5" ry="29.3" transform="rotate(-5.300 377.0 226.0)" stroke-width="2.500"/><ellipse cx="377.0" cy="226.0" rx="4.5" ry="29.3" transform="rotate(-5.300 377.0 226.0)" stroke-width="4.200" stroke-linecap="round" pathLength="120" stroke-dasharray="0.010 9.990" stroke-dashoffset="17.0"/></g><path d="M250 236.500L384 226.300" stroke="#2a5590" stroke-width="0.700"/><path d="M252.6 234.5v-3.200" stroke="#e2332b" stroke-width="1.400"/><path d="M252.6 236.0l0.800 2.800" stroke="#2fa84f" stroke-width="1.400"/><path d="M265.0 233.6v-3.200" stroke="#e2332b" stroke-width="1.400"/><path d="M265.0 235.1l0.800 2.800" stroke="#2fa84f" stroke-width="1.400"/><path d="M277.5 232.6v-3.200" stroke="#e2332b" stroke-width="1.400"/><path d="M277.5 234.1l0.800 2.800" stroke="#2fa84f" stroke-width="1.400"/><path d="M289.9 231.7v-3.200" stroke="#e2332b" stroke-width="1.400"/><path d="M289.9 233.2l0.800 2.800" stroke="#2fa84f" stroke-width="1.400"/><path d="M302.4 230.7v-3.200" stroke="#e2332b" stroke-width="1.400"/><path d="M302.4 232.2l0.800 2.800" stroke="#2fa84f" stroke-width="1.400"/><path d="M314.8 229.8v-3.200" stroke="#e2332b" stroke-width="1.400"/><path d="M314.8 231.2l0.800 2.800" stroke="#2fa84f" stroke-width="1.400"/><path d="M327.2 228.8v-3.200" stroke="#e2332b" stroke-width="1.400"/><path d="M327.2 230.3l0.800 2.800" stroke="#2fa84f" stroke-width="1.400"/><path d="M339.7 227.8v-3.200" stroke="#e2332b" stroke-width="1.400"/><path d="M339.7 229.3l0.800 2.800" stroke="#2fa84f" stroke-width="1.400"/><path d="M352.1 226.9v-3.200" stroke="#e2332b" stroke-width="1.400"/><path d="M352.1 228.4l0.800 2.800" stroke="#2fa84f" stroke-width="1.400"/><path d="M364.6 225.9v-3.200" stroke="#e2332b" stroke-width="1.400"/><path d="M364.6 227.4l0.800 2.800" stroke="#2fa84f" stroke-width="1.400"/><path d="M377.0 225.0v-3.200" stroke="#e2332b" stroke-width="1.400"/><path d="M377.0 226.5l0.800 2.800" stroke="#2fa84f" stroke-width="1.400"/><g fill="none" stroke="#4b5255" stroke-width="0.900"><path d="M340.0 138.0C443.3 138.0 490.0 104.2 598.0 95.2"/><path d="M360.0 192.0C479.1 192.0 501.0 172.2 600.0 137.7"/><path d="M360.0 169.0C418.7 169.0 466.5 158.1 598.0 232.3"/><path d="M360 169C445 166 520 192 598 253.300"/><path d="M360 180C450 180 520 205 598 260.800"/><path d="M360 169C450 169 520 175 598 181.500"/><path d="M360 180C450 180 520 185 598 191"/><path d="M348.0 208.6C486.1 208.6 597.0 233.0 598.0 233.2"/><path d="M348.0 211.0C487.9 211.0 577.6 235.2 598.0 236.0"/><path d="M360.0 273.5C422.3 273.5 439.9 274.8 598.0 266.0"/><path d="M360.0 326.5C498.8 326.5 586.0 298.0 598.0 291.2"/><path d="M360.0 348.0C497.0 348.0 561.8 318.7 598.0 309.5"/><path d="M360.0 369.0C502.5 369.0 547.7 348.4 598.0 342.2"/><path d="M360.0 404.7C422.3 404.7 584.7 416.6 598.0 418.0"/><path d="M360.0 405.5C460.7 405.5 596.6 431.4 598.0 428.3"/><path d="M360.0 428.7C390.0 428.7 515.1 429.7 520.0 432.0"/><path d="M360 168.500L598 167.600"/><path d="M360 254.700L598 254.400"/></g><rect x="312" y="162.5" width="48.19999999999999" height="4.3" fill="#484644"/><rect x="312" y="166.8" width="48.19999999999999" height="4.3" fill="#cfcdca"/><rect x="313.5" y="168.10000000000002" width="45.19999999999999" height="1.9" fill="#e6e4e1"/><rect x="312" y="174.1" width="48.19999999999999" height="4.3" fill="#484644"/><rect x="312" y="178.4" width="48.19999999999999" height="4.3" fill="#cfcdca"/><rect x="313.5" y="179.70000000000002" width="45.19999999999999" height="1.9" fill="#e6e4e1"/><rect x="312" y="185.6" width="48.19999999999999" height="4.3" fill="#484644"/><rect x="312" y="189.9" width="48.19999999999999" height="4.3" fill="#cfcdca"/><rect x="313.5" y="191.20000000000002" width="45.19999999999999" height="1.9" fill="#e6e4e1"/><rect x="312" y="248.5" width="48.19999999999999" height="4.3" fill="#484644"/><rect x="312" y="252.8" width="48.19999999999999" height="4.3" fill="#cfcdca"/><rect x="313.5" y="254.10000000000002" width="45.19999999999999" height="1.9" fill="#e6e4e1"/><rect x="312" y="267.9" width="48.19999999999999" height="4.3" fill="#484644"/><rect x="312" y="272.2" width="48.19999999999999" height="4.3" fill="#cfcdca"/><rect x="313.5" y="273.5" width="45.19999999999999" height="1.9" fill="#e6e4e1"/><rect x="312" y="320.8" width="48.19999999999999" height="4.3" fill="#484644"/><rect x="312" y="325.1" width="48.19999999999999" height="4.3" fill="#cfcdca"/><rect x="313.5" y="326.40000000000003" width="45.19999999999999" height="1.9" fill="#e6e4e1"/><rect x="312" y="341.7" width="48.19999999999999" height="4.3" fill="#484644"/><rect x="312" y="346.0" width="48.19999999999999" height="4.3" fill="#cfcdca"/><rect x="313.5" y="347.3" width="45.19999999999999" height="1.9" fill="#e6e4e1"/><rect x="312" y="362.4" width="48.19999999999999" height="4.3" fill="#484644"/><rect x="312" y="366.7" width="48.19999999999999" height="4.3" fill="#cfcdca"/><rect x="313.5" y="368.0" width="45.19999999999999" height="1.9" fill="#e6e4e1"/><rect x="312" y="399.2" width="48.19999999999999" height="4.3" fill="#484644"/><rect x="312" y="403.5" width="48.19999999999999" height="4.3" fill="#cfcdca"/><rect x="313.5" y="404.8" width="45.19999999999999" height="1.9" fill="#e6e4e1"/><rect x="312" y="421.6" width="48.19999999999999" height="4.3" fill="#484644"/><rect x="312" y="425.90000000000003" width="48.19999999999999" height="4.3" fill="#cfcdca"/><rect x="313.5" y="427.20000000000005" width="45.19999999999999" height="1.9" fill="#e6e4e1"/><rect x="312" y="131.700" width="27.600" height="4.500" fill="#7e8c91"/><rect x="312" y="136.200" width="27.600" height="4" fill="#c9dce8"/><rect x="312" y="140.200" width="27.600" height="4" fill="#a9c3d4"/><rect x="318.500" y="121.500" width="15" height="6" fill="#efefee" stroke="#dcdcdc" stroke-width="0.6"/><path d="M321 124.500h10" stroke="#777" stroke-width="1" stroke-dasharray="1.500 0.700"/><rect x="327" y="156.800" width="14" height="4" fill="#eeeeed" stroke="#dcdcdc" stroke-width="0.5"/><path d="M329 158.800h10" stroke="#777" stroke-width="0.9" stroke-dasharray="1.500 0.700"/><rect x="311.500" y="201.800" width="36.500" height="4.400" fill="#5b5a58"/><path d="M314 204h18" stroke="#bdbdbd" stroke-width="0.9" stroke-dasharray="2 0.800"/><rect x="311.500" y="206.200" width="36.500" height="6.800" fill="#d3d1ce"/><rect x="313" y="207.500" width="33.500" height="4" fill="#e4e2df"/><rect x="322" y="233" width="18" height="13.300" fill="#f5f5f5" stroke="#c4c4c4" stroke-width="0.6"/><path d="M324 236h13M324 238.500h13M324 241h13M324 243.500h10" stroke="#9a9a9a" stroke-width="0.7" stroke-dasharray="1.800 0.800"/><rect x="312.500" y="309" width="25" height="4.300" fill="#ededec" stroke="#dadada" stroke-width="0.5"/><path d="M314.500 311.2h20" stroke="#777" stroke-width="0.9" stroke-dasharray="1.500 0.700"/><rect x="312.500" y="386.7" width="25" height="4.300" fill="#ededec" stroke="#dadada" stroke-width="0.5"/><path d="M314.500 388.9h20" stroke="#777" stroke-width="0.9" stroke-dasharray="1.500 0.700"/><rect x="532.500" y="79" width="62" height="15.300" fill="#f8f8f8" stroke="#dedede" stroke-width="0.8"/><path d="M563.700 79v15.300" stroke="#dedede" stroke-width="0.8"/><g fill="none" stroke="#555" stroke-width="0.9"><circle cx="541" cy="88.500" r="3.300"/><path d="M541.500 88.500l3.700-6 3.700 6z"/><rect x="551" y="85" width="5.500" height="5.500"/><path d="M551 85l1.800-1.800h5.500v5.500l-1.800 1.800M556.500 85l1.800-1.800"/></g><g fill="#cfe6f7" stroke="#1b8ad2" stroke-width="1.100"><rect x="568.500" y="83.500" width="5.500" height="3.800"/><rect x="583.500" y="85" width="7" height="4.500"/><rect x="571" y="89.500" width="5" height="2.500"/><path d="M574 85.500q4 0 4.500 2.500t5 1.500M576 90.700h3" fill="none"/></g><rect x="580" y="101" width="14.300" height="42.300" fill="#f9f9f9" stroke="#e3e3e3" stroke-width="0.7"/><rect x="580" y="144.600" width="14.300" height="17.200" fill="#f9f9f9" stroke="#e3e3e3" stroke-width="0.7"/><g fill="none" stroke="#444" stroke-width="1.100"><path d="M584 106v-2h2M588.500 104h2v2M590.500 109v2h-2M586 111h-2v-2"/><path d="M584 122h6.500M587.200 118.800v6.500"/><path d="M584 135.600h6.500"/><path d="M587.200 150.500v8M583.200 154.500h8"/><path d="M585.900 151.800l1.300-1.500 1.300 1.500M585.900 157.200l1.300 1.500 1.300-1.500M584.500 153.200l-1.500 1.300 1.500 1.300M589.900 153.200l1.500 1.300-1.500 1.300" stroke-width="0.9"/></g></svg><svg class="a" style="left:520px;top:22px" width="10" height="13" viewBox="0 0 10 13"><path d="M1.800 1.400v8l1.900-1.700 1.400 3 1.300-.6-1.400-3h2.500z" fill="#fff" stroke="#111" stroke-width="0.7"/></svg>
</div>
<div class="a" style="left:598.300px;top:72px;width:0.900px;height:360px;background:#8fa6b0"></div>
<div class="a" style="left:599px;top:33px;width:5px;height:426px;background:linear-gradient(to right,rgba(150,150,150,.45),rgba(200,200,200,0))"></div>
<div class="t rt" style="left:661.500px;top:6.500px;font-size:22.500px;font-weight:bold;font-family:'Liberation Serif','Noto Serif CJK SC',serif;"><span style="letter-spacing:1.190px">Sacrifice1127</span><span style="letter-spacing:-1px;font-size:20px">的水利</span><span style="display:inline-block;transform:scaleX(0.780);transform-origin:0 50%;letter-spacing:0.5px">BIM</span></div>
</body></html>
